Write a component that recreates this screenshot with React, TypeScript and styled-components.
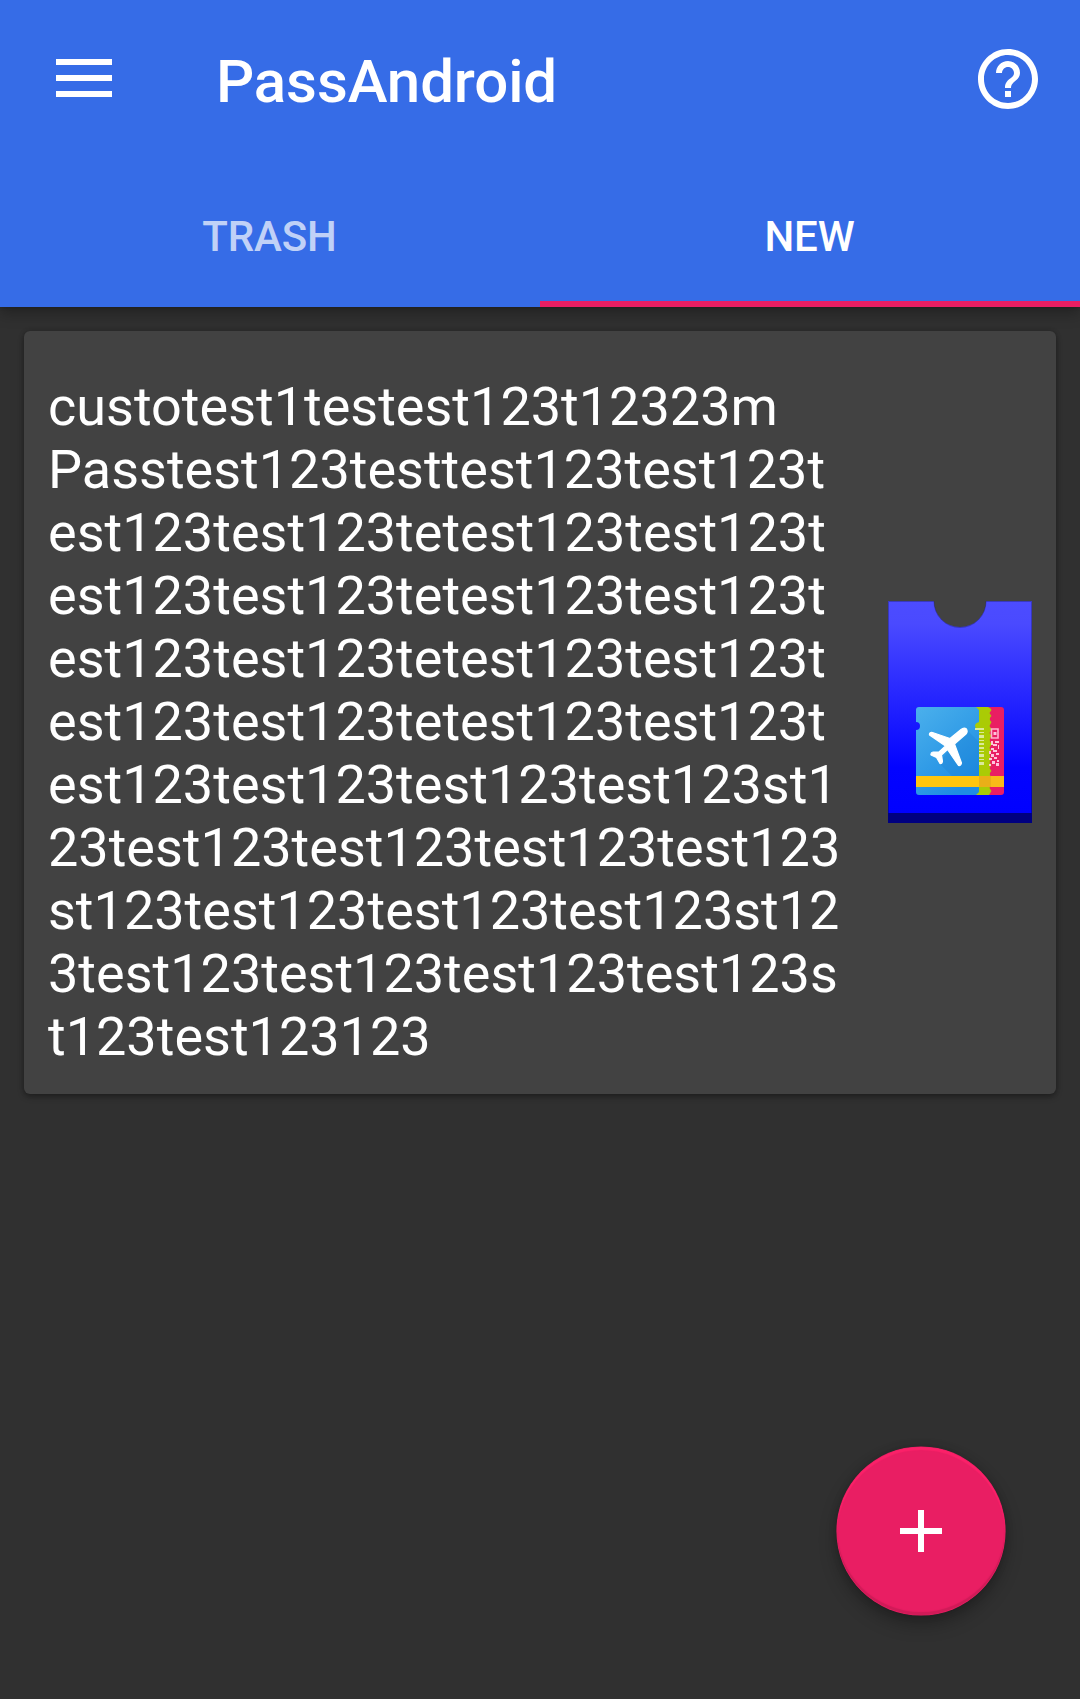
import React from 'react';
import styled, { createGlobalStyle } from 'styled-components';

const GlobalStyle = createGlobalStyle`
  * { box-sizing: border-box; }
  body { margin: 0; background: #303030; overflow: hidden; }
`;

const Screen = styled.div`
  position: relative;
  display: flex;
  flex-direction: column;
  height: 1699px;
  background: #303030;
  color: #fff;
  font-family: Roboto, 'Liberation Sans', sans-serif;
`;

const Header = styled.header`
  display: flex;
  flex-direction: column;
  height: 307px;
  background: #366ce7;
  box-shadow: 0 6px 14px rgba(0, 0, 0, 0.3), 0 0 4px rgba(0, 0, 0, 0.2);
`;

const Toolbar = styled.div`
  display: flex;
  align-items: center;
  height: 163px;
  padding: 0 36px 5px 48px;
`;

const IconButton = styled.button`
  display: flex;
  flex: none;
  width: 72px;
  height: 72px;
  padding: 0;
  border: 0;
  background: none;
`;

const Title = styled.h1`
  flex: 1;
  margin: 6px 0 0 96px;
  font-size: 60px;
  font-weight: 500;
  line-height: 70px;
  letter-spacing: -0.1px;
`;

const Tabs = styled.nav`
  display: grid;
  grid-template-columns: 1fr 1fr;
  height: 144px;
`;

const Tab = styled.button<{ $active?: boolean }>`
  display: flex;
  align-items: center;
  justify-content: center;
  padding: 10px 1px 0 0;
  border: 0;
  border-bottom: 6px solid ${(p) => (p.$active ? '#e91e63' : 'transparent')};
  background: none;
  color: ${(p) => (p.$active ? '#fff' : 'rgba(255, 255, 255, 0.7)')};
  font: 500 42px/50px Roboto, 'Liberation Sans', sans-serif;
  letter-spacing: -0.1px;
`;

const PassCard = styled.article`
  display: flex;
  align-items: center;
  justify-content: space-between;
  height: 763px;
  margin: 24px;
  padding: 18px 24px 0;
  border-radius: 6px;
  background: #424242;
  box-shadow: 0 3px 6px rgba(0, 0, 0, 0.3), 0 0 5px rgba(0, 0, 0, 0.2);
`;

const PassName = styled.p`
  margin: 0;
  font-size: 54px;
  line-height: 63px;
  white-space: pre;
`;

const PassArt = styled.svg`
  flex: none;
  width: 144px;
  height: 222px;
  margin-bottom: 19px;
`;

const AddButton = styled.button`
  position: absolute;
  right: 75px;
  bottom: 84px;
  display: flex;
  align-items: center;
  justify-content: center;
  width: 168px;
  height: 168px;
  padding: 0;
  border: 0;
  border-radius: 50%;
  background: #e91e63;
  box-shadow: inset 0 3px 1px #fb2169, inset 0 -3px 1px #d01b58,
    0 0 0 0.6px #e91e63, 0 9px 18px rgba(0, 0, 0, 0.3),
    0 0 8px rgba(0, 0, 0, 0.15);
`;

const nameLines = [
  'custotest1testest123t12323m',
  'Passtest123testtest123test123t',
  'est123test123tetest123test123t',
  'est123test123tetest123test123t',
  'est123test123tetest123test123t',
  'est123test123tetest123test123t',
  'est123test123test123test123st1',
  '23test123test123test123test123',
  'st123test123test123test123st12',
  '3test123test123test123test123s',
  't123test123123',
];

const MenuIcon = () => (
  <svg width="72" height="72" viewBox="0 0 72 72" fill="#fff">
    <path d="M8 16h56v6H8zM8 32h56v6H8zM8 48h56v6H8z" />
  </svg>
);

const HelpIcon = () => (
  <svg width="72" height="72" viewBox="0 0 24 24" fill="#fff">
    <path d="M11 18h2v-2h-2v2zm1-16C6.48 2 2 6.48 2 12s4.48 10 10 10 10-4.48 10-10S17.52 2 12 2zm0 18c-4.41 0-8-3.59-8-8s3.59-8 8-8 8 3.59 8 8-3.59 8-8 8zm0-14c-2.21 0-4 1.79-4 4h2c0-1.1.9-2 2-2s2 .9 2 2c0 2-3 1.75-3 5h2c0-2.25 3-2.5 3-5 0-2.21-1.79-4-4-4z" />
  </svg>
);

const PassIllustration = () => (
  <PassArt viewBox="0 0 144 222">
    <defs>
      <linearGradient id="sleeve" x2="0" y2="1">
        <stop stopColor="#4c4cff" />
        <stop offset=".1" stopColor="#4a4aff" />
        <stop offset=".75" stopColor="#0303ff" />
        <stop offset="1" stopColor="#0000ff" />
      </linearGradient>
      <linearGradient id="sky" x2=".6" y2="1">
        <stop stopColor="#4bb0ec" />
        <stop offset="1" stopColor="#1e8de3" />
      </linearGradient>
    </defs>
    <path d="M0 0H46A26 26 0 0 0 98 0H144V222H0Z" fill="url(#sleeve)" />
    <path d="M.5 212V.5H46A26 26 0 0 0 98 .5H143.500V212" fill="none" stroke="#000" strokeOpacity=".25" />
    <path d="M0 212H144V222H0Z" fill="#000080" />
    <path d="M97 106H113Q116 106 116 109V191Q116 194 113 194H97Z" fill="#e91e63" />
    <path d="M86 106H100Q103 107 103.500 109L101.500 112L103.500 115Q100 118 103.500 121L101.500 125L103.500 128L101.500 132L103.500 135Q100 139 103.500 143L101.500 147L103.500 150Q100 154 103.500 158L101.500 161L103.500 164L101.500 167L103.500 170Q100 173 103.500 176L101.500 180L103.500 183L101.500 187L103.500 190L101 194H86Z" fill="#aacb05" />
    <path d="M31 106H88L91 109V121Q87 122 87 125Q87 127 91 129V191L88 194H31Q28 194 28 191V129Q32 129 32 125Q32 121 28 121V109Q28 106 31 106Z" fill="url(#sky)" />
    <path d="M78 128L91 141V175H64L51 162Z" fill="#1675cf" opacity=".22" />
    <path d="M28 175H116V186H28Z" fill="#ffc60e" />
    <path d="M91 175H103V186H91Z" fill="#e5a91c" opacity=".8" />
    <path d="M103 175H116V186H103Z" fill="#f7b51c" opacity=".7" />
    <path
      d="M41.500 134Q41 131 44.500 131.500L62 137.500L73 128.500Q76 126 78.500 128Q80 131 78 133L66.500 143L73.500 162Q73 165 70.500 164.500L59.500 148.500L53.500 154L54.500 160.500Q54 163 52 162.500L48.500 156.500L43 154Q42.500 151.500 45 151L51 151L57.500 145Z"
      fill="#fff"
      stroke="#fff"
      strokeWidth="1.200"
      strokeLinejoin="round"
    />
    <path d="M87 127h9v2h-9zm4 4h5v1h-5zm0 3h5v3h-5zm0 5h5v1h-5zm0 3h5v2h-5zm0 4h5v2h-5zm0 4h5v1h-5zm0 3h5v3h-5zm0 5h5v1h-5zm0 3h5v3h-5z" fill="#dbe99a" />
    <path d="M103.500 128h6.500v9h-6.500z" fill="none" stroke="#ffb3d0" strokeWidth="1.600" />
    <path
      d="M105.500 131h3v3h-3zM103 140h2v4h-2zm4 0h4v2h-4zm-2 3h4v2h-4zm5 1h1v4h-1zm-7 3h3v2h-3zm-2 3h2v3h-2zm4 -1h4v2h-4zm3 3h3v2h-3zm-5 1h3v3h-3zm-2 4h3v2h-3zm5 -1h3v2h-3zm3 3h2v2h-2zm-5 1h3v3h-3zm-3 3h2v2h-2zm7 -1h3v3h-3z"
      fill="#ffc4dc"
    />
  </PassArt>
);

export default function App() {
  return (
    <>
      <GlobalStyle />
      <Screen>
        <Header>
          <Toolbar>
            <IconButton aria-label="Menu"><MenuIcon /></IconButton>
            <Title>PassAndroid</Title>
            <IconButton aria-label="Help"><HelpIcon /></IconButton>
          </Toolbar>
          <Tabs>
            <Tab>TRASH</Tab>
            <Tab $active>NEW</Tab>
          </Tabs>
        </Header>
        <PassCard>
          <PassName>{nameLines.join('\n')}</PassName>
          <PassIllustration />
        </PassCard>
        <AddButton aria-label="Add pass">
          <svg width="42" height="42" fill="#fff">
            <path d="M18 0h6v18h18v6H24v18h-6V24H0v-6h18z" />
          </svg>
        </AddButton>
      </Screen>
    </>
  );
}
